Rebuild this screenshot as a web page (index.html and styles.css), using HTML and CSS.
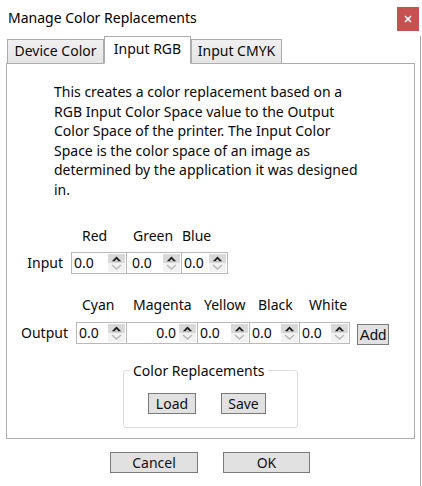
FILE: index.html
```html
<!DOCTYPE html>
<html lang="en">
<head>
    <meta charset="UTF-8">
    <title>Manage Color Replacements</title>
    <link rel="stylesheet" href="styles.css">
</head>
<body>
    <div class="titlebar">
        <span class="title">Manage Color Replacements</span>
        <button class="close" type="button">
            <svg width="8" height="8" viewBox="0 0 8 8"><path d="M1 1 L7 7 M7 1 L1 7" stroke="#fff" stroke-width="1.6"/></svg>
        </button>
    </div>
    <div class="dialog">
        <div class="tabs">
            <div class="tab tab-device">Device Color</div>
            <div class="tab tab-rgb active">Input RGB</div>
            <div class="tab tab-cmyk">Input CMYK</div>
        </div>
        <div class="panel">
            <p class="intro">This creates a color replacement based on a<br>RGB Input Color Space value to the Output<br>Color Space of the printer. The Input Color<br>Space is the color space of an image as<br>determined by the application it was designed<br>in.</p>

            <div class="heads heads-in">
                <span class="w51">Red</span>
                <span class="w49">Green</span>
                <span>Blue</span>
            </div>
            <div class="row row-in">
                <span class="row-label">Input</span>
                <div class="spin w56"><span class="val">0.0</span><span class="arrows"><span class="up"><svg width="11" height="7" viewBox="0 0 11 7"><path d="M0.8 6.2 L5.5 1.5 L10.2 6.2 Z" fill="#1a1a1a"/><path d="M3.4 6.2 L5.5 4.1 L7.6 6.2 Z" fill="#d9d9d9"/></svg></span><span class="down"><svg width="11" height="6" viewBox="0 0 11 6"><path d="M1 1 L5.5 5 L10 1" fill="none" stroke="#b8b8b8" stroke-width="1.5"/></svg></span></span></div>
                <div class="spin w56 pad-more"><span class="val">0.0</span><span class="arrows"><span class="up"><svg width="11" height="7" viewBox="0 0 11 7"><path d="M0.8 6.2 L5.5 1.5 L10.2 6.2 Z" fill="#1a1a1a"/><path d="M3.4 6.2 L5.5 4.1 L7.6 6.2 Z" fill="#d9d9d9"/></svg></span><span class="down"><svg width="11" height="6" viewBox="0 0 11 6"><path d="M1 1 L5.5 5 L10 1" fill="none" stroke="#b8b8b8" stroke-width="1.5"/></svg></span></span></div>
                <div class="spin w47"><span class="val">0.0</span><span class="arrows"><span class="up"><svg width="11" height="7" viewBox="0 0 11 7"><path d="M0.8 6.2 L5.5 1.5 L10.2 6.2 Z" fill="#1a1a1a"/><path d="M3.4 6.2 L5.5 4.1 L7.6 6.2 Z" fill="#d9d9d9"/></svg></span><span class="down"><svg width="11" height="6" viewBox="0 0 11 6"><path d="M1 1 L5.5 5 L10 1" fill="none" stroke="#b8b8b8" stroke-width="1.5"/></svg></span></span></div>
            </div>

            <div class="heads heads-out">
                <span class="w51">Cyan</span>
                <span class="w71">Magenta</span>
                <span class="w54">Yellow</span>
                <span class="w51">Black</span>
                <span>White</span>
            </div>
            <div class="row row-out">
                <span class="row-label">Output</span>
                <div class="spin w51"><span class="val">0.0</span><span class="arrows"><span class="up"><svg width="11" height="7" viewBox="0 0 11 7"><path d="M0.8 6.2 L5.5 1.5 L10.2 6.2 Z" fill="#1a1a1a"/><path d="M3.4 6.2 L5.5 4.1 L7.6 6.2 Z" fill="#d9d9d9"/></svg></span><span class="down"><svg width="11" height="6" viewBox="0 0 11 6"><path d="M1 1 L5.5 5 L10 1" fill="none" stroke="#b8b8b8" stroke-width="1.5"/></svg></span></span></div>
                <div class="spin w72 right"><span class="val">0.0</span><span class="arrows"><span class="up"><svg width="11" height="7" viewBox="0 0 11 7"><path d="M0.8 6.2 L5.5 1.5 L10.2 6.2 Z" fill="#1a1a1a"/><path d="M3.4 6.2 L5.5 4.1 L7.6 6.2 Z" fill="#d9d9d9"/></svg></span><span class="down"><svg width="11" height="6" viewBox="0 0 11 6"><path d="M1 1 L5.5 5 L10 1" fill="none" stroke="#b8b8b8" stroke-width="1.5"/></svg></span></span></div>
                <div class="spin w53"><span class="val">0.0</span><span class="arrows"><span class="up"><svg width="11" height="7" viewBox="0 0 11 7"><path d="M0.8 6.2 L5.5 1.5 L10.2 6.2 Z" fill="#1a1a1a"/><path d="M3.4 6.2 L5.5 4.1 L7.6 6.2 Z" fill="#d9d9d9"/></svg></span><span class="down"><svg width="11" height="6" viewBox="0 0 11 6"><path d="M1 1 L5.5 5 L10 1" fill="none" stroke="#b8b8b8" stroke-width="1.5"/></svg></span></span></div>
                <div class="spin w51"><span class="val">0.0</span><span class="arrows"><span class="up"><svg width="11" height="7" viewBox="0 0 11 7"><path d="M0.8 6.2 L5.5 1.5 L10.2 6.2 Z" fill="#1a1a1a"/><path d="M3.4 6.2 L5.5 4.1 L7.6 6.2 Z" fill="#d9d9d9"/></svg></span><span class="down"><svg width="11" height="6" viewBox="0 0 11 6"><path d="M1 1 L5.5 5 L10 1" fill="none" stroke="#b8b8b8" stroke-width="1.5"/></svg></span></span></div>
                <div class="spin w51"><span class="val">0.0</span><span class="arrows"><span class="up"><svg width="11" height="7" viewBox="0 0 11 7"><path d="M0.8 6.2 L5.5 1.5 L10.2 6.2 Z" fill="#1a1a1a"/><path d="M3.4 6.2 L5.5 4.1 L7.6 6.2 Z" fill="#d9d9d9"/></svg></span><span class="down"><svg width="11" height="6" viewBox="0 0 11 6"><path d="M1 1 L5.5 5 L10 1" fill="none" stroke="#b8b8b8" stroke-width="1.5"/></svg></span></span></div>
                <button class="btn add" type="button">Add</button>
            </div>

            <fieldset class="group">
                <legend>Color Replacements</legend>
                <div class="group-buttons">
                    <button class="btn load" type="button">Load</button>
                    <button class="btn save" type="button">Save</button>
                </div>
            </fieldset>
        </div>
        <div class="actions">
            <button class="btn cancel" type="button">Cancel</button>
            <button class="btn ok" type="button">OK</button>
        </div>
    </div>
</body>
</html>
```

FILE: styles.css
```css
* {
    margin: 0;
    padding: 0;
    box-sizing: border-box;
}
body, html {
    width: 422px;
    height: 486px;
    background-color: #fff;
    font-family: "Noto Sans", "Open Sans", sans-serif;
    font-size: 14px;
    color: #0a0a0a;
    overflow: hidden;
}
.titlebar {
    height: 36px;
    display: flex;
    align-items: flex-start;
    justify-content: space-between;
}
.title {
    margin: 8px 0 0 8px;
    font-size: 14px;
    line-height: 20px;
    color: #000;
}
.close {
    width: 22px;
    height: 24px;
    margin: 7px 3px 0 0;
    border: none;
    background-color: #c75050;
    display: flex;
    align-items: center;
    justify-content: center;
}
.dialog {
    width: 421px;
    height: 450px;
    border-right: 1px solid #a6a6a6;
}
.tabs {
    display: flex;
    align-items: flex-end;
    height: 27px;
    padding-left: 7px;
}
.tab {
    height: 24px;
    border: 1px solid #acacac;
    border-bottom: none;
    background: linear-gradient(#f0f0f0, #e5e5e5);
    text-align: center;
    line-height: 22px;
    font-size: 14px;
}
.tab-device { width: 97px; }
.tab-rgb { width: 87px; }
.tab-cmyk { width: 91px; }
.tab.active {
    height: 28px;
    margin-bottom: -1px;
    background: #fff;
    position: relative;
    z-index: 1;
    line-height: 24px;
    border-bottom: 1px solid #fff;
}
.panel {
    width: 409px;
    height: 376px;
    margin-left: 6px;
    border: 1px solid #acacac;
}
.intro {
    margin-top: 18px;
    padding-left: 47px;
    line-height: 19.6px;
}
.heads {
    display: flex;
    padding-left: 75px;
    line-height: 20px;
}
.heads-in { margin-top: 26px; }
.heads-out { margin-top: 21px; }
.w47 { width: 47px; }
.w49 { width: 49px; }
.w51 { width: 51px; }
.w53 { width: 53px; }
.w54 { width: 54px; }
.w56 { width: 56px; }
.w71 { width: 71px; }
.w72 { width: 72px; }
.row {
    display: flex;
    align-items: center;
    margin-top: 6px;
    height: 22px;
}
.row-out { margin-top: 7px; }
.row-label {
    text-align: right;
    margin-right: 8px;
}
.row-in .row-label { width: 56px; }
.row-out .row-label { width: 61px; }
.spin {
    height: 22px;
    display: flex;
    border: 1px solid #b9b9b9;
    background-color: #fff;
}
.spin + .spin { margin-left: -1px; }
.spin .val {
    flex: 1;
    padding-left: 2px;
    line-height: 20px;
}
.spin.pad-more .val { padding-left: 5px; }
.spin.right .val {
    text-align: right;
    padding-right: 3px;
}
.arrows {
    width: 17px;
    margin: 1px 1px 1px 0;
    display: flex;
    flex-direction: column;
}
.arrows .up, .arrows .down {
    flex: 1;
    display: flex;
    align-items: center;
    justify-content: center;
}
.arrows .up { background-color: #d9d9d9; }
.arrows .down { background-color: #f2f2f2; }
.btn {
    height: 21px;
    border: 1px solid #7a7a7a;
    background-color: #e1e1e1;
    font-family: "Noto Sans", "Open Sans", sans-serif;
    font-size: 14px;
    line-height: 19px;
    color: #111;
}
.add {
    width: 32px;
    margin-left: 7px;
    margin-top: 3px;
    font-family: "Liberation Sans", Arial, sans-serif;
    font-size: 15px;
}
.group {
    width: 175px;
    margin: 17px auto 0;
    border: 1px solid #dcdcdc;
    border-radius: 3px;
    padding: 0;
}
.group legend {
    margin-left: 6px;
    padding: 0 3px;
    line-height: 20px;
}
.group-buttons {
    display: flex;
    gap: 25px;
    padding: 12px 0 13px 24px;
}
.load { width: 48px; }
.save { width: 45px; }
.actions {
    display: flex;
    justify-content: center;
    gap: 25px;
    margin-top: 13px;
}
.cancel { width: 88px; }
.ok { width: 87px; }
```
